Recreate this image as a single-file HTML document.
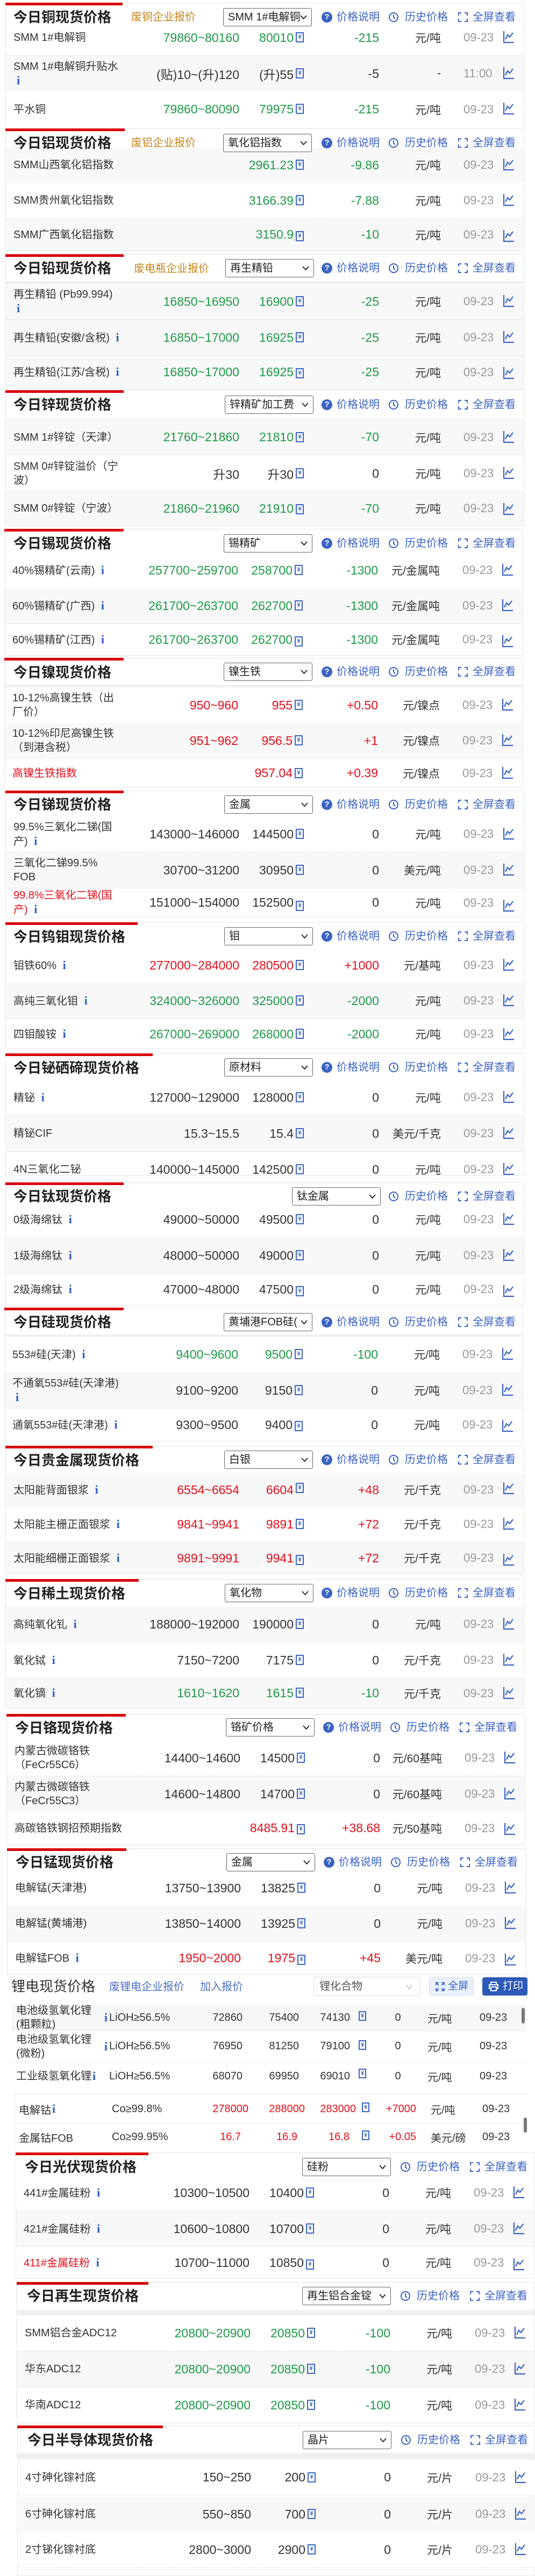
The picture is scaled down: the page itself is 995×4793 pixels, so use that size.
<!DOCTYPE html>
<html><head><meta charset="utf-8">
<style>
*{box-sizing:border-box}
body{margin:0;width:995px;height:4783px;position:relative;background:#fff;font-family:"Liberation Sans","Noto Sans CJK SC",sans-serif;color:#333;overflow:hidden}
.sec{position:absolute;border:1px solid #e6e6e6;background:#fff}
.bar{position:absolute;height:5px;background:#d9000d}
.band{position:absolute;height:6px;background:#f0f0f0}
.t{position:absolute;font-size:26px;font-weight:bold;color:#222;line-height:30px;white-space:nowrap}
.sub{position:absolute;font-size:20px;color:#c4851c;line-height:24px;white-space:nowrap}
.sel{position:absolute;width:165px;height:34px;border:1px solid #666;border-radius:3px;font-size:20px;line-height:32px;padding-left:8px;white-space:nowrap;overflow:hidden;color:#222;background:#fff;padding-right:26px}
.sel svg{position:absolute;right:8px;top:12px;width:13px;height:9px;fill:none;stroke:#222;stroke-width:1.8}
.L{position:absolute;left:0;width:995px;height:24px}
.L>*{position:absolute;top:0;font-size:20px;line-height:24px;color:#3b63c4;white-space:nowrap;font-weight:normal;font-style:normal}
.L .h1{left:598px;top:2px;width:20px;height:20px;border-radius:50%;background:#3b63c4;color:#fff;font:bold 15px/20px "Liberation Sans",sans-serif;text-align:center}
.L .a1{left:626px}.L .h2{left:722px;top:2px}.L .a2{left:753px}.L .h3{left:851px;top:2px}.L .a3{left:879px}
.L svg{width:20px;height:20px;fill:none;stroke:#3b63c4;stroke-width:2}
.r{position:absolute;height:67px;border-bottom:1px dashed #e2e2e2;font-size:23px;background:#fff}
.r.g{background:#f8f8f8}
.r>span{position:absolute;top:0;height:100%;display:flex;align-items:center;white-space:nowrap}
.r>span.n{left:14px;width:200px;white-space:normal;line-height:26px;font-size:20px;color:#333}
.rg{left:194px;width:240px;justify-content:flex-end}
.p{left:395px;width:140px;justify-content:flex-end}
.c{left:574px;width:120px;justify-content:flex-end}
.r>span.u{left:680px;width:129px;justify-content:flex-end;font-size:21px}
.r>span.d{left:851px;color:#999;font-size:22px}
.y{position:absolute;left:539px;top:23px;width:15px;height:19px;border:2px solid #3b63c4;font-style:normal;font-size:11px;line-height:15px;text-align:center;color:#3b63c4;font-weight:bold;border-radius:1px}
.k{position:absolute;left:924px;top:20px;width:22px;height:24px;fill:none;stroke:#3b63c4;stroke-width:2.2}
.G{color:#1f9a48}.R{color:#e3101c}.K{color:#333}
.i{font-family:"Liberation Serif",serif;font-weight:bold;color:#2c5bc6;font-size:22px;margin-left:6px}
.nr{color:#e3101c}
.lr{position:absolute;font-size:20px;border-bottom:1px solid #eee;background:#fff}
.lr>span{position:absolute;top:0;height:100%;display:flex;align-items:center;white-space:nowrap}
.lr>span.ln{white-space:normal;line-height:26px;width:170px}
.lr .ly{position:absolute;width:14px;height:18px;border:2px solid #3b63c4;font-style:normal;font-size:11px;line-height:14px;text-align:center;color:#3b63c4;font-weight:bold}
</style></head><body>

<!-- COPPER -->
<div class="sec" style="top:5px;left:10px;width:965px;height:231px"></div>
<div class="r" style="top:37px;left:11px;width:963px"><span class="n"><span>SMM 1#电解铜</span></span><span class="rg G">79860~80160</span><span class="p G">80010</span><i class="y">¥</i><span class="c G">-215</span><span class="u">元/吨</span><span class="d">09-23</span><svg class="k" viewBox="0 0 22 24"><path d="M2 1V22H21M5 16L9 8L13 12L19 4"/></svg></div>
<div class="r g" style="top:104px;left:11px;width:963px"><span class="n"><span>SMM 1#电解铜升贴水 <b class="i">i</b></span></span><span class="rg K">(贴)10~(升)120</span><span class="p K">(升)55</span><i class="y">¥</i><span class="c K">-5</span><span class="u">-</span><span class="d">11:00</span><svg class="k" viewBox="0 0 22 24"><path d="M2 1V22H21M5 16L9 8L13 12L19 4"/></svg></div>
<div class="r" style="top:170px;left:11px;width:963px;border-bottom:none"><span class="n"><span>平水铜</span></span><span class="rg G">79860~80090</span><span class="p G">79975</span><i class="y">¥</i><span class="c G">-215</span><span class="u">元/吨</span><span class="d">09-23</span><svg class="k" viewBox="0 0 22 24"><path d="M2 1V22H21M5 16L9 8L13 12L19 4"/></svg></div>
<div class="bar" style="top:5px;left:10px;width:218px"></div>
<div class="t" style="top:17px;left:25px;background:#fff">今日铜现货价格</div>
<div class="sub" style="top:20px;left:244px">废铜企业报价</div>
<div class="sel" style="top:15px;left:415px">SMM 1#电解铜<svg viewBox="0 0 13 9"><path d="M1 1L6.5 7L12 1"/></svg></div>
<div class="L" style="top:20px"><i class="h1">?</i><b class="a1">价格说明</b><i class="h2"><svg viewBox="0 0 20 20"><circle cx="10" cy="10" r="8"/><path d="M10 5V10L13 13"/></svg></i><b class="a2">历史价格</b><i class="h3"><svg viewBox="0 0 20 20"><path d="M2 7V2H7M13 2H18V7M18 13V18H13M7 18H2V13"/></svg></i><b class="a3">全屏查看</b></div>

<!-- ALUMINIUM -->
<div class="sec" style="top:239px;left:10px;width:965px;height:228px"></div>
<div class="r g" style="top:274px;left:11px;width:963px"><span class="n"><span>SMM山西氧化铝指数</span></span><span class="p G">2961.23</span><i class="y">¥</i><span class="c G">-9.86</span><span class="u">元/吨</span><span class="d">09-23</span><svg class="k" viewBox="0 0 22 24"><path d="M2 1V22H21M5 16L9 8L13 12L19 4"/></svg></div>
<div class="r" style="top:340px;left:11px;width:963px"><span class="n"><span>SMM贵州氧化铝指数</span></span><span class="p G">3166.39</span><i class="y">¥</i><span class="c G">-7.88</span><span class="u">元/吨</span><span class="d">09-23</span><svg class="k" viewBox="0 0 22 24"><path d="M2 1V22H21M5 16L9 8L13 12L19 4"/></svg></div>
<div class="r g" style="top:407px;left:11px;width:963px;height:59px;border-bottom:none"><span class="n"><span>SMM广西氧化铝指数</span></span><span class="p G">3150.9</span><i class="y">¥</i><span class="c G">-10</span><span class="u">元/吨</span><span class="d">09-23</span><svg class="k" viewBox="0 0 22 24"><path d="M2 1V22H21M5 16L9 8L13 12L19 4"/></svg></div>
<div class="bar" style="top:239px;left:10px;width:222px"></div>
<div class="t" style="top:251px;left:25px">今日铝现货价格</div>
<div class="sub" style="top:254px;left:244px">废铝企业报价</div>
<div class="sel" style="top:249px;left:415px">氧化铝指数<svg viewBox="0 0 13 9"><path d="M1 1L6.5 7L12 1"/></svg></div>
<div class="L" style="top:254px"><i class="h1">?</i><b class="a1">价格说明</b><i class="h2"><svg viewBox="0 0 20 20"><circle cx="10" cy="10" r="8"/><path d="M10 5V10L13 13"/></svg></i><b class="a2">历史价格</b><i class="h3"><svg viewBox="0 0 20 20"><path d="M2 7V2H7M13 2H18V7M18 13V18H13M7 18H2V13"/></svg></i><b class="a3">全屏查看</b></div>

<!-- LEAD -->
<div class="sec" style="top:473px;left:10px;width:965px;height:251px"></div>
<div class="band" style="top:523px;left:11px;width:963px"></div>
<div class="r g" style="top:528px;left:11px;width:963px"><span class="n"><span>再生精铅 (Pb99.994) <b class="i">i</b></span></span><span class="rg G">16850~16950</span><span class="p G">16900</span><i class="y">¥</i><span class="c G">-25</span><span class="u">元/吨</span><span class="d">09-23</span><svg class="k" viewBox="0 0 22 24"><path d="M2 1V22H21M5 16L9 8L13 12L19 4"/></svg></div>
<div class="r g" style="top:595px;left:11px;width:963px"><span class="n"><span>再生精铅(安徽/含税) <b class="i">i</b></span></span><span class="rg G">16850~17000</span><span class="p G">16925</span><i class="y">¥</i><span class="c G">-25</span><span class="u">元/吨</span><span class="d">09-23</span><svg class="k" viewBox="0 0 22 24"><path d="M2 1V22H21M5 16L9 8L13 12L19 4"/></svg></div>
<div class="r g" style="top:662px;left:11px;width:963px;height:61px;border-bottom:none"><span class="n"><span>再生精铅(江苏/含税) <b class="i">i</b></span></span><span class="rg G">16850~17000</span><span class="p G">16925</span><i class="y">¥</i><span class="c G">-25</span><span class="u">元/吨</span><span class="d">09-23</span><svg class="k" viewBox="0 0 22 24"><path d="M2 1V22H21M5 16L9 8L13 12L19 4"/></svg></div>
<div class="bar" style="top:473px;left:10px;width:220px"></div>
<div class="t" style="top:484px;left:25px">今日铅现货价格</div>
<div class="sub" style="top:488px;left:249px">废电瓶企业报价</div>
<div class="sel" style="top:482px;left:419px">再生精铅<svg viewBox="0 0 13 9"><path d="M1 1L6.5 7L12 1"/></svg></div>
<div class="L" style="top:487px"><i class="h1">?</i><b class="a1">价格说明</b><i class="h2"><svg viewBox="0 0 20 20"><circle cx="10" cy="10" r="8"/><path d="M10 5V10L13 13"/></svg></i><b class="a2">历史价格</b><i class="h3"><svg viewBox="0 0 20 20"><path d="M2 7V2H7M13 2H18V7M18 13V18H13M7 18H2V13"/></svg></i><b class="a3">全屏查看</b></div>

<!-- ZINC -->
<div class="sec" style="top:726px;left:10px;width:965px;height:252px"></div>
<div class="r g" style="top:780px;left:11px;width:963px;border-top:1px dashed #e2e2e2"><span class="n"><span>SMM 1#锌锭（天津）</span></span><span class="rg G">21760~21860</span><span class="p G">21810</span><i class="y">¥</i><span class="c G">-70</span><span class="u">元/吨</span><span class="d">09-23</span><svg class="k" viewBox="0 0 22 24"><path d="M2 1V22H21M5 16L9 8L13 12L19 4"/></svg></div>
<div class="r" style="top:848px;left:11px;width:963px"><span class="n"><span>SMM 0#锌锭溢价（宁波）</span></span><span class="rg K">升30</span><span class="p K">升30</span><i class="y">¥</i><span class="c K">0</span><span class="u">元/吨</span><span class="d">09-23</span><svg class="k" viewBox="0 0 22 24"><path d="M2 1V22H21M5 16L9 8L13 12L19 4"/></svg></div>
<div class="r g" style="top:915px;left:11px;width:963px;height:62px;border-bottom:none"><span class="n"><span>SMM 0#锌锭（宁波）</span></span><span class="rg G">21860~21960</span><span class="p G">21910</span><i class="y">¥</i><span class="c G">-70</span><span class="u">元/吨</span><span class="d">09-23</span><svg class="k" viewBox="0 0 22 24"><path d="M2 1V22H21M5 16L9 8L13 12L19 4"/></svg></div>
<div class="bar" style="top:726px;left:10px;width:220px"></div>
<div class="t" style="top:738px;left:25px">今日锌现货价格</div>
<div class="sel" style="top:736px;left:418px">锌精矿加工费<svg viewBox="0 0 13 9"><path d="M1 1L6.5 7L12 1"/></svg></div>
<div class="L" style="top:741px"><i class="h1">?</i><b class="a1">价格说明</b><i class="h2"><svg viewBox="0 0 20 20"><circle cx="10" cy="10" r="8"/><path d="M10 5V10L13 13"/></svg></i><b class="a2">历史价格</b><i class="h3"><svg viewBox="0 0 20 20"><path d="M2 7V2H7M13 2H18V7M18 13V18H13M7 18H2V13"/></svg></i><b class="a3">全屏查看</b></div>

<!-- TIN -->
<div class="sec" style="top:984px;left:8px;width:965px;height:236px"></div>
<div class="r" style="top:1028px;left:9px;width:963px"><span class="n"><span>40%锡精矿(云南) <b class="i">i</b></span></span><span class="rg G">257700~259700</span><span class="p G">258700</span><i class="y">¥</i><span class="c G">-1300</span><span class="u">元/金属吨</span><span class="d">09-23</span><svg class="k" viewBox="0 0 22 24"><path d="M2 1V22H21M5 16L9 8L13 12L19 4"/></svg></div>
<div class="r g" style="top:1094px;left:9px;width:963px"><span class="n"><span>60%锡精矿(广西) <b class="i">i</b></span></span><span class="rg G">261700~263700</span><span class="p G">262700</span><i class="y">¥</i><span class="c G">-1300</span><span class="u">元/金属吨</span><span class="d">09-23</span><svg class="k" viewBox="0 0 22 24"><path d="M2 1V22H21M5 16L9 8L13 12L19 4"/></svg></div>
<div class="r" style="top:1161px;left:9px;width:963px;height:58px;border-bottom:none"><span class="n"><span>60%锡精矿(江西) <b class="i">i</b></span></span><span class="rg G">261700~263700</span><span class="p G">262700</span><i class="y">¥</i><span class="c G">-1300</span><span class="u">元/金属吨</span><span class="d">09-23</span><svg class="k" viewBox="0 0 22 24"><path d="M2 1V22H21M5 16L9 8L13 12L19 4"/></svg></div>
<div class="bar" style="top:984px;left:8px;width:222px"></div>
<div class="t" style="top:996px;left:25px">今日锡现货价格</div>
<div class="sel" style="top:994px;left:416px">锡精矿<svg viewBox="0 0 13 9"><path d="M1 1L6.5 7L12 1"/></svg></div>
<div class="L" style="top:999px"><i class="h1">?</i><b class="a1">价格说明</b><i class="h2"><svg viewBox="0 0 20 20"><circle cx="10" cy="10" r="8"/><path d="M10 5V10L13 13"/></svg></i><b class="a2">历史价格</b><i class="h3"><svg viewBox="0 0 20 20"><path d="M2 7V2H7M13 2H18V7M18 13V18H13M7 18H2V13"/></svg></i><b class="a3">全屏查看</b></div>

<!-- NICKEL -->
<div class="sec" style="top:1224px;left:8px;width:965px;height:242px"></div>
<div class="band" style="top:1274px;left:9px;width:963px"></div>
<div class="r" style="top:1279px;left:9px;width:963px"><span class="n"><span>10-12%高镍生铁（出厂价）</span></span><span class="rg R">950~960</span><span class="p R">955</span><i class="y">¥</i><span class="c R">+0.50</span><span class="u">元/镍点</span><span class="d">09-23</span><svg class="k" viewBox="0 0 22 24"><path d="M2 1V22H21M5 16L9 8L13 12L19 4"/></svg></div>
<div class="r g" style="top:1345px;left:9px;width:963px"><span class="n"><span>10-12%印尼高镍生铁（到港含税）</span></span><span class="rg R">951~962</span><span class="p R">956.5</span><i class="y">¥</i><span class="c R">+1</span><span class="u">元/镍点</span><span class="d">09-23</span><svg class="k" viewBox="0 0 22 24"><path d="M2 1V22H21M5 16L9 8L13 12L19 4"/></svg></div>
<div class="r" style="top:1412px;left:9px;width:963px;height:53px;border-bottom:none"><span class="n"><span class="nr">高镍生铁指数</span></span><span class="p R">957.04</span><i class="y" style="top:17px">¥</i><span class="c R">+0.39</span><span class="u">元/镍点</span><span class="d">09-23</span><svg class="k" viewBox="0 0 22 24" style="top:14px"><path d="M2 1V22H21M5 16L9 8L13 12L19 4"/></svg></div>
<div class="bar" style="top:1224px;left:8px;width:222px"></div>
<div class="t" style="top:1236px;left:25px">今日镍现货价格</div>
<div class="sel" style="top:1233px;left:416px">镍生铁<svg viewBox="0 0 13 9"><path d="M1 1L6.5 7L12 1"/></svg></div>
<div class="L" style="top:1238px"><i class="h1">?</i><b class="a1">价格说明</b><i class="h2"><svg viewBox="0 0 20 20"><circle cx="10" cy="10" r="8"/><path d="M10 5V10L13 13"/></svg></i><b class="a2">历史价格</b><i class="h3"><svg viewBox="0 0 20 20"><path d="M2 7V2H7M13 2H18V7M18 13V18H13M7 18H2V13"/></svg></i><b class="a3">全屏查看</b></div>

<!-- ANTIMONY -->
<div class="sec" style="top:1471px;left:10px;width:965px;height:236px"></div>
<div class="r" style="top:1519px;left:11px;width:963px"><span class="n"><span>99.5%三氧化二锑(国产) <b class="i">i</b></span></span><span class="rg K">143000~146000</span><span class="p K">144500</span><i class="y">¥</i><span class="c K">0</span><span class="u">元/吨</span><span class="d">09-23</span><svg class="k" viewBox="0 0 22 24"><path d="M2 1V22H21M5 16L9 8L13 12L19 4"/></svg></div>
<div class="r g" style="top:1586px;left:11px;width:963px"><span class="n"><span>三氧化二锑99.5% FOB</span></span><span class="rg K">30700~31200</span><span class="p K">30950</span><i class="y">¥</i><span class="c K">0</span><span class="u">美元/吨</span><span class="d">09-23</span><svg class="k" viewBox="0 0 22 24"><path d="M2 1V22H21M5 16L9 8L13 12L19 4"/></svg></div>
<div class="r" style="top:1653px;left:11px;width:963px;height:53px;border-bottom:none"><span class="n"><span><span class="nr">99.8%三氧化二锑(国产)</span> <b class="i">i</b></span></span><span class="rg K">151000~154000</span><span class="p K">152500</span><i class="y">¥</i><span class="c K">0</span><span class="u">元/吨</span><span class="d">09-23</span><svg class="k" viewBox="0 0 22 24"><path d="M2 1V22H21M5 16L9 8L13 12L19 4"/></svg></div>
<div class="bar" style="top:1471px;left:10px;width:220px"></div>
<div class="t" style="top:1482px;left:25px">今日锑现货价格</div>
<div class="sel" style="top:1480px;left:417px">金属<svg viewBox="0 0 13 9"><path d="M1 1L6.5 7L12 1"/></svg></div>
<div class="L" style="top:1485px"><i class="h1">?</i><b class="a1">价格说明</b><i class="h2"><svg viewBox="0 0 20 20"><circle cx="10" cy="10" r="8"/><path d="M10 5V10L13 13"/></svg></i><b class="a2">历史价格</b><i class="h3"><svg viewBox="0 0 20 20"><path d="M2 7V2H7M13 2H18V7M18 13V18H13M7 18H2V13"/></svg></i><b class="a3">全屏查看</b></div>

<!-- W MO -->
<div class="sec" style="top:1716px;left:10px;width:965px;height:236px"></div>
<div class="r" style="top:1763px;left:11px;width:963px"><span class="n"><span>钼铁60% <b class="i">i</b></span></span><span class="rg R">277000~284000</span><span class="p R">280500</span><i class="y">¥</i><span class="c R">+1000</span><span class="u">元/基吨</span><span class="d">09-23</span><svg class="k" viewBox="0 0 22 24"><path d="M2 1V22H21M5 16L9 8L13 12L19 4"/></svg></div>
<div class="r g" style="top:1829px;left:11px;width:963px"><span class="n"><span>高纯三氧化钼 <b class="i">i</b></span></span><span class="rg G">324000~326000</span><span class="p G">325000</span><i class="y">¥</i><span class="c G">-2000</span><span class="u">元/吨</span><span class="d">09-23</span><svg class="k" viewBox="0 0 22 24"><path d="M2 1V22H21M5 16L9 8L13 12L19 4"/></svg></div>
<div class="r" style="top:1897px;left:11px;width:963px;height:54px;border-bottom:none"><span class="n"><span>四钼酸铵 <b class="i">i</b></span></span><span class="rg G">267000~269000</span><span class="p G">268000</span><i class="y" style="top:17px">¥</i><span class="c G">-2000</span><span class="u">元/吨</span><span class="d">09-23</span><svg class="k" viewBox="0 0 22 24" style="top:15px"><path d="M2 1V22H21M5 16L9 8L13 12L19 4"/></svg></div>
<div class="bar" style="top:1716px;left:10px;width:246px"></div>
<div class="t" style="top:1728px;left:25px">今日钨钼现货价格</div>
<div class="sel" style="top:1725px;left:417px">钼<svg viewBox="0 0 13 9"><path d="M1 1L6.5 7L12 1"/></svg></div>
<div class="L" style="top:1730px"><i class="h1">?</i><b class="a1">价格说明</b><i class="h2"><svg viewBox="0 0 20 20"><circle cx="10" cy="10" r="8"/><path d="M10 5V10L13 13"/></svg></i><b class="a2">历史价格</b><i class="h3"><svg viewBox="0 0 20 20"><path d="M2 7V2H7M13 2H18V7M18 13V18H13M7 18H2V13"/></svg></i><b class="a3">全屏查看</b></div>

<!-- BI SE TE -->
<div class="sec" style="top:1960px;left:10px;width:965px;height:228px"></div>
<div class="r" style="top:2009px;left:11px;width:963px"><span class="n"><span>精铋 <b class="i">i</b></span></span><span class="rg K">127000~129000</span><span class="p K">128000</span><i class="y">¥</i><span class="c K">0</span><span class="u">元/吨</span><span class="d">09-23</span><svg class="k" viewBox="0 0 22 24"><path d="M2 1V22H21M5 16L9 8L13 12L19 4"/></svg></div>
<div class="r g" style="top:2076px;left:11px;width:963px"><span class="n"><span>精铋CIF</span></span><span class="rg K">15.3~15.5</span><span class="p K">15.4</span><i class="y">¥</i><span class="c K">0</span><span class="u">美元/千克</span><span class="d">09-23</span><svg class="k" viewBox="0 0 22 24"><path d="M2 1V22H21M5 16L9 8L13 12L19 4"/></svg></div>
<div class="r" style="top:2143px;left:11px;width:963px;height:44px;border-bottom:none"><span class="n" style="height:66px"><span>4N三氧化二铋</span></span><span class="rg K" style="height:66px">140000~145000</span><span class="p K" style="height:66px">142500</span><i class="y">¥</i><span class="c K" style="height:66px">0</span><span class="u" style="height:66px">元/吨</span><span class="d" style="height:66px">09-23</span><svg class="k" viewBox="0 0 22 24"><path d="M2 1V22H21M5 16L9 8L13 12L19 4"/></svg></div>
<div class="bar" style="top:1960px;left:10px;width:274px"></div>
<div class="t" style="top:1972px;left:25px">今日铋硒碲现货价格</div>
<div class="sel" style="top:1969px;left:417px">原材料<svg viewBox="0 0 13 9"><path d="M1 1L6.5 7L12 1"/></svg></div>
<div class="L" style="top:1974px"><i class="h1">?</i><b class="a1">价格说明</b><i class="h2"><svg viewBox="0 0 20 20"><circle cx="10" cy="10" r="8"/><path d="M10 5V10L13 13"/></svg></i><b class="a2">历史价格</b><i class="h3"><svg viewBox="0 0 20 20"><path d="M2 7V2H7M13 2H18V7M18 13V18H13M7 18H2V13"/></svg></i><b class="a3">全屏查看</b></div>

<!-- TITANIUM -->
<div class="sec" style="top:2200px;left:10px;width:965px;height:229px"></div>
<div class="r" style="top:2236px;left:11px;width:963px"><span class="n"><span>0级海绵钛 <b class="i">i</b></span></span><span class="rg K">49000~50000</span><span class="p K">49500</span><i class="y">¥</i><span class="c K">0</span><span class="u">元/吨</span><span class="d">09-23</span><svg class="k" viewBox="0 0 22 24"><path d="M2 1V22H21M5 16L9 8L13 12L19 4"/></svg></div>
<div class="r g" style="top:2303px;left:11px;width:963px"><span class="n"><span>1级海绵钛 <b class="i">i</b></span></span><span class="rg K">48000~50000</span><span class="p K">49000</span><i class="y">¥</i><span class="c K">0</span><span class="u">元/吨</span><span class="d">09-23</span><svg class="k" viewBox="0 0 22 24"><path d="M2 1V22H21M5 16L9 8L13 12L19 4"/></svg></div>
<div class="r" style="top:2370px;left:11px;width:963px;height:58px;border-bottom:none"><span class="n"><span>2级海绵钛 <b class="i">i</b></span></span><span class="rg K">47000~48000</span><span class="p K">47500</span><i class="y">¥</i><span class="c K">0</span><span class="u">元/吨</span><span class="d">09-23</span><svg class="k" viewBox="0 0 22 24"><path d="M2 1V22H21M5 16L9 8L13 12L19 4"/></svg></div>
<div class="bar" style="top:2200px;left:10px;width:220px"></div>
<div class="t" style="top:2211px;left:25px">今日钛现货价格</div>
<div class="sel" style="top:2209px;left:543px">钛金属<svg viewBox="0 0 13 9"><path d="M1 1L6.5 7L12 1"/></svg></div>
<div class="L" style="top:2214px"><i class="h2"><svg viewBox="0 0 20 20"><circle cx="10" cy="10" r="8"/><path d="M10 5V10L13 13"/></svg></i><b class="a2">历史价格</b><i class="h3"><svg viewBox="0 0 20 20"><path d="M2 7V2H7M13 2H18V7M18 13V18H13M7 18H2V13"/></svg></i><b class="a3">全屏查看</b></div>

<!-- SILICON -->
<div class="sec" style="top:2433px;left:8px;width:965px;height:249px"></div>
<div class="band" style="top:2483px;left:9px;width:963px"></div>
<div class="r" style="top:2487px;left:9px;width:963px"><span class="n"><span>553#硅(天津) <b class="i">i</b></span></span><span class="rg G">9400~9600</span><span class="p G">9500</span><i class="y">¥</i><span class="c G">-100</span><span class="u">元/吨</span><span class="d">09-23</span><svg class="k" viewBox="0 0 22 24"><path d="M2 1V22H21M5 16L9 8L13 12L19 4"/></svg></div>
<div class="r g" style="top:2554px;left:9px;width:963px"><span class="n"><span>不通氧553#硅(天津港) <b class="i">i</b></span></span><span class="rg K">9100~9200</span><span class="p K">9150</span><i class="y">¥</i><span class="c K">0</span><span class="u">元/吨</span><span class="d">09-23</span><svg class="k" viewBox="0 0 22 24"><path d="M2 1V22H21M5 16L9 8L13 12L19 4"/></svg></div>
<div class="r" style="top:2621px;left:9px;width:963px;height:60px;border-bottom:none"><span class="n"><span>通氧553#硅(天津港) <b class="i">i</b></span></span><span class="rg K">9300~9500</span><span class="p K">9400</span><i class="y">¥</i><span class="c K">0</span><span class="u">元/吨</span><span class="d">09-23</span><svg class="k" viewBox="0 0 22 24"><path d="M2 1V22H21M5 16L9 8L13 12L19 4"/></svg></div>
<div class="bar" style="top:2433px;left:8px;width:222px"></div>
<div class="t" style="top:2445px;left:25px">今日硅现货价格</div>
<div class="sel" style="top:2443px;left:416px">黄埔港FOB硅(<svg viewBox="0 0 13 9"><path d="M1 1L6.5 7L12 1"/></svg></div>
<div class="L" style="top:2448px"><i class="h1">?</i><b class="a1">价格说明</b><i class="h2"><svg viewBox="0 0 20 20"><circle cx="10" cy="10" r="8"/><path d="M10 5V10L13 13"/></svg></i><b class="a2">历史价格</b><i class="h3"><svg viewBox="0 0 20 20"><path d="M2 7V2H7M13 2H18V7M18 13V18H13M7 18H2V13"/></svg></i><b class="a3">全屏查看</b></div>

<!-- PRECIOUS -->
<div class="sec" style="top:2690px;left:10px;width:965px;height:239px"></div>
<div class="r g" style="top:2742px;left:11px;width:963px;height:61px"><span class="n"><span>太阳能背面银浆 <b class="i">i</b></span></span><span class="rg R">6554~6654</span><span class="p R">6604</span><i class="y" style="top:17px">¥</i><span class="c R">+48</span><span class="u">元/千克</span><span class="d">09-23</span><svg class="k" viewBox="0 0 22 24" style="top:15px"><path d="M2 1V22H21M5 16L9 8L13 12L19 4"/></svg></div>
<div class="r" style="top:2803px;left:11px;width:963px"><span class="n"><span>太阳能主栅正面银浆 <b class="i">i</b></span></span><span class="rg R">9841~9941</span><span class="p R">9891</span><i class="y">¥</i><span class="c R">+72</span><span class="u">元/千克</span><span class="d">09-23</span><svg class="k" viewBox="0 0 22 24"><path d="M2 1V22H21M5 16L9 8L13 12L19 4"/></svg></div>
<div class="r g" style="top:2870px;left:11px;width:963px;height:58px;border-bottom:none"><span class="n"><span>太阳能细栅正面银浆 <b class="i">i</b></span></span><span class="rg R">9891~9991</span><span class="p R">9941</span><i class="y">¥</i><span class="c R">+72</span><span class="u">元/千克</span><span class="d">09-23</span><svg class="k" viewBox="0 0 22 24"><path d="M2 1V22H21M5 16L9 8L13 12L19 4"/></svg></div>
<div class="bar" style="top:2690px;left:10px;width:274px"></div>
<div class="t" style="top:2702px;left:25px">今日贵金属现货价格</div>
<div class="sel" style="top:2699px;left:417px">白银<svg viewBox="0 0 13 9"><path d="M1 1L6.5 7L12 1"/></svg></div>
<div class="L" style="top:2704px"><i class="h1">?</i><b class="a1">价格说明</b><i class="h2"><svg viewBox="0 0 20 20"><circle cx="10" cy="10" r="8"/><path d="M10 5V10L13 13"/></svg></i><b class="a2">历史价格</b><i class="h3"><svg viewBox="0 0 20 20"><path d="M2 7V2H7M13 2H18V7M18 13V18H13M7 18H2V13"/></svg></i><b class="a3">全屏查看</b></div>

<!-- RARE EARTH -->
<div class="sec" style="top:2938px;left:10px;width:965px;height:241px"></div>
<div class="r g" style="top:2989px;left:11px;width:963px"><span class="n"><span>高纯氧化钆 <b class="i">i</b></span></span><span class="rg K">188000~192000</span><span class="p K">190000</span><i class="y">¥</i><span class="c K">0</span><span class="u">元/吨</span><span class="d">09-23</span><svg class="k" viewBox="0 0 22 24"><path d="M2 1V22H21M5 16L9 8L13 12L19 4"/></svg></div>
<div class="r" style="top:3056px;left:11px;width:963px"><span class="n"><span>氧化铽 <b class="i">i</b></span></span><span class="rg K">7150~7200</span><span class="p K">7175</span><i class="y">¥</i><span class="c K">0</span><span class="u">元/千克</span><span class="d">09-23</span><svg class="k" viewBox="0 0 22 24"><path d="M2 1V22H21M5 16L9 8L13 12L19 4"/></svg></div>
<div class="r g" style="top:3123px;left:11px;width:963px;height:55px;border-bottom:none"><span class="n"><span>氧化镝 <b class="i">i</b></span></span><span class="rg G">1610~1620</span><span class="p G">1615</span><i class="y" style="top:17px">¥</i><span class="c G">-10</span><span class="u">元/千克</span><span class="d">09-23</span><svg class="k" viewBox="0 0 22 24" style="top:15px"><path d="M2 1V22H21M5 16L9 8L13 12L19 4"/></svg></div>
<div class="bar" style="top:2938px;left:10px;width:248px"></div>
<div class="t" style="top:2950px;left:25px">今日稀土现货价格</div>
<div class="sel" style="top:2947px;left:418px">氧化物<svg viewBox="0 0 13 9"><path d="M1 1L6.5 7L12 1"/></svg></div>
<div class="L" style="top:2952px"><i class="h1">?</i><b class="a1">价格说明</b><i class="h2"><svg viewBox="0 0 20 20"><circle cx="10" cy="10" r="8"/><path d="M10 5V10L13 13"/></svg></i><b class="a2">历史价格</b><i class="h3"><svg viewBox="0 0 20 20"><path d="M2 7V2H7M13 2H18V7M18 13V18H13M7 18H2V13"/></svg></i><b class="a3">全屏查看</b></div>

<!-- CHROMIUM -->
<div class="sec" style="top:3189px;left:12px;width:965px;height:244px"></div>
<div class="r" style="top:3238px;left:13px;width:963px"><span class="n"><span>内蒙古微碳铬铁（FeCr55C6）</span></span><span class="rg K">14400~14600</span><span class="p K">14500</span><i class="y">¥</i><span class="c K">0</span><span class="u">元/60基吨</span><span class="d">09-23</span><svg class="k" viewBox="0 0 22 24"><path d="M2 1V22H21M5 16L9 8L13 12L19 4"/></svg></div>
<div class="r g" style="top:3305px;left:13px;width:963px"><span class="n"><span>内蒙古微碳铬铁（FeCr55C3）</span></span><span class="rg K">14600~14800</span><span class="p K">14700</span><i class="y">¥</i><span class="c K">0</span><span class="u">元/60基吨</span><span class="d">09-23</span><svg class="k" viewBox="0 0 22 24"><path d="M2 1V22H21M5 16L9 8L13 12L19 4"/></svg></div>
<div class="r" style="top:3371px;left:13px;width:963px;height:61px;border-bottom:none"><span class="n"><span>高碳铬铁钢招预期指数</span></span><span class="p R">8485.91</span><i class="y">¥</i><span class="c R">+38.68</span><span class="u">元/50基吨</span><span class="d">09-23</span><svg class="k" viewBox="0 0 22 24"><path d="M2 1V22H21M5 16L9 8L13 12L19 4"/></svg></div>
<div class="bar" style="top:3189px;left:12px;width:222px"></div>
<div class="t" style="top:3200px;left:28px">今日铬现货价格</div>
<div class="sel" style="top:3197px;left:420px">铬矿价格<svg viewBox="0 0 13 9"><path d="M1 1L6.5 7L12 1"/></svg></div>
<div class="L" style="top:3202px;left:3px"><i class="h1">?</i><b class="a1">价格说明</b><i class="h2"><svg viewBox="0 0 20 20"><circle cx="10" cy="10" r="8"/><path d="M10 5V10L13 13"/></svg></i><b class="a2">历史价格</b><i class="h3"><svg viewBox="0 0 20 20"><path d="M2 7V2H7M13 2H18V7M18 13V18H13M7 18H2V13"/></svg></i><b class="a3">全屏查看</b></div>

<!-- MANGANESE -->
<div class="sec" style="top:3439px;left:13px;width:966px;height:235px"></div>
<div class="r" style="top:3480px;left:14px;width:964px"><span class="n"><span>电解锰(天津港)</span></span><span class="rg K">13750~13900</span><span class="p K">13825</span><i class="y">¥</i><span class="c K">0</span><span class="u">元/吨</span><span class="d">09-23</span><svg class="k" viewBox="0 0 22 24"><path d="M2 1V22H21M5 16L9 8L13 12L19 4"/></svg></div>
<div class="r g" style="top:3546px;left:14px;width:964px"><span class="n"><span>电解锰(黄埔港)</span></span><span class="rg K">13850~14000</span><span class="p K">13925</span><i class="y">¥</i><span class="c K">0</span><span class="u">元/吨</span><span class="d">09-23</span><svg class="k" viewBox="0 0 22 24"><path d="M2 1V22H21M5 16L9 8L13 12L19 4"/></svg></div>
<div class="r" style="top:3614px;left:14px;width:964px;height:59px;border-bottom:none"><span class="n"><span>电解锰FOB <b class="i">i</b></span></span><span class="rg R">1950~2000</span><span class="p R">1975</span><i class="y">¥</i><span class="c R">+45</span><span class="u">美元/吨</span><span class="d">09-23</span><svg class="k" viewBox="0 0 22 24"><path d="M2 1V22H21M5 16L9 8L13 12L19 4"/></svg></div>
<div class="bar" style="top:3439px;left:13px;width:222px"></div>
<div class="t" style="top:3450px;left:29px">今日锰现货价格</div>
<div class="sel" style="top:3448px;left:421px">金属<svg viewBox="0 0 13 9"><path d="M1 1L6.5 7L12 1"/></svg></div>
<div class="L" style="top:3453px;left:4px"><i class="h1">?</i><b class="a1">价格说明</b><i class="h2"><svg viewBox="0 0 20 20"><circle cx="10" cy="10" r="8"/><path d="M10 5V10L13 13"/></svg></i><b class="a2">历史价格</b><i class="h3"><svg viewBox="0 0 20 20"><path d="M2 7V2H7M13 2H18V7M18 13V18H13M7 18H2V13"/></svg></i><b class="a3">全屏查看</b></div>

<!-- LITHIUM -->
<div style="position:absolute;top:3680px;left:21px;font-size:26px;line-height:32px;color:#333">锂电现货价格</div>
<div style="position:absolute;top:3685px;left:203px;font-size:20px;line-height:24px;color:#4a6fc6">废锂电企业报价</div>
<div style="position:absolute;top:3685px;left:372px;font-size:20px;line-height:24px;color:#4a6fc6">加入报价</div>
<div style="position:absolute;top:3678px;left:583px;width:199px;height:36px;border:1px solid #dcdcdc;border-radius:4px;font-size:20px;line-height:34px;padding-left:10px;color:#555">锂化合物<svg style="position:absolute;right:14px;top:12px;width:12px;height:12px;fill:none;stroke:#bbb;stroke-width:1.4" viewBox="0 0 12 12"><path d="M1 2L6 10L11 2"/></svg></div>
<div style="position:absolute;top:3679px;left:798px;width:83px;height:34px;background:#eaf1fd;border:1px solid #cfdcf5;border-radius:4px;font-size:19px;line-height:32px;color:#3b63c4;padding-left:34px"><svg style="position:absolute;left:11px;top:8px;width:17px;height:17px;fill:none;stroke:#3b63c4;stroke-width:1.8" viewBox="0 0 17 17"><path d="M1 6V1H6M11 1H16V6M16 11V16H11M6 16H1V11M1 1L6 6M16 1L11 6M16 16L11 11M1 16L6 11"/></svg>全屏</div>
<div style="position:absolute;top:3679px;left:897px;width:84px;height:34px;background:#2d5ab8;border-radius:4px;font-size:19px;line-height:34px;color:#fff;padding-left:38px"><svg style="position:absolute;left:12px;top:8px;width:18px;height:18px;fill:none;stroke:#fff;stroke-width:2" viewBox="0 0 18 18"><path d="M4 6V1H14V6M3 13H1V6H17V13H15M4 10H14V17H4Z"/></svg>打印</div>

<div class="lr" style="top:3730px;left:21px;width:959px;height:49px;background:#f7f7f7"><span class="ln" style="left:9px">电池级氢氧化锂(粗颗粒) <b class="i">i</b></span><span style="left:182px">LiOH≥56.5%</span><span style="left:330px;width:100px;justify-content:flex-end">72860</span><span style="left:435px;width:100px;justify-content:flex-end">75400</span><span style="left:530px;width:100px;justify-content:flex-end">74130</span><i class="ly" style="left:646px;top:12px">¥</i><span style="left:694px;width:50px;justify-content:center">0</span><span style="left:774px">元/吨</span><span style="left:871px">09-23</span></div>
<div class="lr" style="top:3779px;left:21px;width:959px;height:58px"><span class="ln" style="left:9px">电池级氢氧化锂(微粉) <b class="i">i</b></span><span style="left:182px">LiOH≥56.5%</span><span style="left:330px;width:100px;justify-content:flex-end">76950</span><span style="left:435px;width:100px;justify-content:flex-end">81250</span><span style="left:530px;width:100px;justify-content:flex-end">79100</span><i class="ly" style="left:646px;top:17px">¥</i><span style="left:694px;width:50px;justify-content:center">0</span><span style="left:774px">元/吨</span><span style="left:871px">09-23</span></div>
<div class="lr" style="top:3837px;left:21px;width:959px;height:52px;border-bottom:none"><span class="ln" style="left:9px;width:180px">工业级氢氧化锂<b class="i" style="margin-left:2px">i</b></span><span style="left:182px">LiOH≥56.5%</span><span style="left:330px;width:100px;justify-content:flex-end">68070</span><span style="left:435px;width:100px;justify-content:flex-end">69950</span><span style="left:530px;width:100px;justify-content:flex-end">69010</span><i class="ly" style="left:646px;top:12px">¥</i><span style="left:694px;width:50px;justify-content:center">0</span><span style="left:774px">元/吨</span><span style="left:871px">09-23</span></div>
<div style="position:absolute;top:3736px;left:970px;width:6px;height:29px;border-radius:3px;background:#777"></div>

<div style="position:absolute;top:3896px;left:27px;width:958px;height:104px;border-top:1px solid #eee;border-left:1px solid #eee"></div>
<div class="lr" style="top:3897px;left:28px;width:957px;height:55px"><span style="left:7px">电解钴<b class="i" style="margin-left:2px">i</b></span><span style="left:180px">Co≥99.8%</span><span class="R" style="left:334px;width:100px;justify-content:flex-end">278000</span><span class="R" style="left:439px;width:100px;justify-content:flex-end">288000</span><span class="R" style="left:534px;width:100px;justify-content:flex-end">283000</span><i class="ly" style="left:645px;top:15px">¥</i><span class="R" style="left:646px;width:100px;justify-content:flex-end">+7000</span><span style="left:773px">元/吨</span><span style="left:869px">09-23</span></div>
<div class="lr" style="top:3952px;left:28px;width:957px;height:48px;border-bottom:none"><span style="left:7px">金属钴FOB</span><span style="left:180px">Co≥99.95%</span><span class="R" style="left:334px;width:100px;justify-content:flex-end;padding-right:14px">16.7</span><span class="R" style="left:439px;width:100px;justify-content:flex-end;padding-right:14px">16.9</span><span class="R" style="left:534px;width:100px;justify-content:flex-end;padding-right:12px">16.8</span><i class="ly" style="left:645px;top:12px">¥</i><span class="R" style="left:646px;width:100px;justify-content:flex-end">+0.05</span><span style="left:773px">美元/磅</span><span style="left:869px">09-23</span></div>
<div style="position:absolute;top:3940px;left:974px;width:6px;height:28px;border-radius:3px;background:#777"></div>

<!-- PV -->
<div class="sec" style="top:4005px;left:29px;width:966px;height:235px"></div>
<div class="r" style="top:4047px;left:30px;width:964px"><span class="n"><span>441#金属硅粉 <b class="i">i</b></span></span><span class="rg K">10300~10500</span><span class="p K">10400</span><i class="y">¥</i><span class="c K">0</span><span class="u">元/吨</span><span class="d">09-23</span><svg class="k" viewBox="0 0 22 24"><path d="M2 1V22H21M5 16L9 8L13 12L19 4"/></svg></div>
<div class="r g" style="top:4114px;left:30px;width:964px"><span class="n"><span>421#金属硅粉 <b class="i">i</b></span></span><span class="rg K">10600~10800</span><span class="p K">10700</span><i class="y">¥</i><span class="c K">0</span><span class="u">元/吨</span><span class="d">09-23</span><svg class="k" viewBox="0 0 22 24"><path d="M2 1V22H21M5 16L9 8L13 12L19 4"/></svg></div>
<div class="r" style="top:4181px;left:30px;width:964px;height:58px;border-bottom:none"><span class="n"><span><span class="nr">411#金属硅粉</span> <b class="i">i</b></span></span><span class="rg K">10700~11000</span><span class="p K">10850</span><i class="y">¥</i><span class="c K">0</span><span class="u">元/吨</span><span class="d">09-23</span><svg class="k" viewBox="0 0 22 24"><path d="M2 1V22H21M5 16L9 8L13 12L19 4"/></svg></div>
<div class="bar" style="top:4005px;left:29px;width:247px"></div>
<div class="t" style="top:4017px;left:46px">今日光伏现货价格</div>
<div class="sel" style="top:4015px;left:562px">硅粉<svg viewBox="0 0 13 9"><path d="M1 1L6.5 7L12 1"/></svg></div>
<div class="L" style="top:4020px;left:22px"><i class="h2"><svg viewBox="0 0 20 20"><circle cx="10" cy="10" r="8"/><path d="M10 5V10L13 13"/></svg></i><b class="a2">历史价格</b><i class="h3"><svg viewBox="0 0 20 20"><path d="M2 7V2H7M13 2H18V7M18 13V18H13M7 18H2V13"/></svg></i><b class="a3">全屏查看</b></div>

<!-- RECYCLED -->
<div class="sec" style="top:4246px;left:31px;width:964px;height:263px"></div>
<div class="band" style="top:4298px;left:32px;width:962px;height:10px"></div>
<div class="r" style="top:4308px;left:32px;width:962px"><span class="n"><span>SMM铝合金ADC12</span></span><span class="rg G">20800~20900</span><span class="p G">20850</span><i class="y">¥</i><span class="c G">-100</span><span class="u">元/吨</span><span class="d">09-23</span><svg class="k" viewBox="0 0 22 24"><path d="M2 1V22H21M5 16L9 8L13 12L19 4"/></svg></div>
<div class="r g" style="top:4375px;left:32px;width:962px"><span class="n"><span>华东ADC12</span></span><span class="rg G">20800~20900</span><span class="p G">20850</span><i class="y">¥</i><span class="c G">-100</span><span class="u">元/吨</span><span class="d">09-23</span><svg class="k" viewBox="0 0 22 24"><path d="M2 1V22H21M5 16L9 8L13 12L19 4"/></svg></div>
<div class="r" style="top:4442px;left:32px;width:962px;height:66px;border-bottom:none"><span class="n"><span>华南ADC12</span></span><span class="rg G">20800~20900</span><span class="p G">20850</span><i class="y">¥</i><span class="c G">-100</span><span class="u">元/吨</span><span class="d">09-23</span><svg class="k" viewBox="0 0 22 24"><path d="M2 1V22H21M5 16L9 8L13 12L19 4"/></svg></div>
<div class="bar" style="top:4246px;left:31px;width:245px"></div>
<div class="t" style="top:4257px;left:50px">今日再生现货价格</div>
<div class="sel" style="top:4255px;left:562px">再生铝合金锭<svg viewBox="0 0 13 9"><path d="M1 1L6.5 7L12 1"/></svg></div>
<div class="L" style="top:4260px;left:22px"><i class="h2"><svg viewBox="0 0 20 20"><circle cx="10" cy="10" r="8"/><path d="M10 5V10L13 13"/></svg></i><b class="a2">历史价格</b><i class="h3"><svg viewBox="0 0 20 20"><path d="M2 7V2H7M13 2H18V7M18 13V18H13M7 18H2V13"/></svg></i><b class="a3">全屏查看</b></div>

<!-- SEMICONDUCTOR -->
<div class="sec" style="top:4513px;left:32px;width:963px;height:280px"></div>
<div class="band" style="top:4564px;left:33px;width:962px;height:11px"></div>
<div class="r" style="top:4576px;left:33px;width:962px;border-top:1px dashed #e2e2e2"><span class="n"><span>4寸砷化镓衬底</span></span><span class="rg K">150~250</span><span class="p K">200</span><i class="y">¥</i><span class="c K">0</span><span class="u">元/片</span><span class="d">09-23</span><svg class="k" viewBox="0 0 22 24"><path d="M2 1V22H21M5 16L9 8L13 12L19 4"/></svg></div>
<div class="r g" style="top:4645px;left:33px;width:962px"><span class="n"><span>6寸砷化镓衬底</span></span><span class="rg K">550~850</span><span class="p K">700</span><i class="y">¥</i><span class="c K">0</span><span class="u">元/片</span><span class="d">09-23</span><svg class="k" viewBox="0 0 22 24"><path d="M2 1V22H21M5 16L9 8L13 12L19 4"/></svg></div>
<div class="r" style="top:4711px;left:33px;width:962px"><span class="n"><span>2寸锑化镓衬底</span></span><span class="rg K">2800~3000</span><span class="p K">2900</span><i class="y">¥</i><span class="c K">0</span><span class="u">元/片</span><span class="d">09-23</span><svg class="k" viewBox="0 0 22 24"><path d="M2 1V22H21M5 16L9 8L13 12L19 4"/></svg></div>
<div class="bar" style="top:4513px;left:32px;width:271px"></div>
<div class="t" style="top:4525px;left:51px">今日半导体现货价格</div>
<div class="sel" style="top:4523px;left:563px">晶片<svg viewBox="0 0 13 9"><path d="M1 1L6.5 7L12 1"/></svg></div>
<div class="L" style="top:4528px;left:23px"><i class="h2"><svg viewBox="0 0 20 20"><circle cx="10" cy="10" r="8"/><path d="M10 5V10L13 13"/></svg></i><b class="a2">历史价格</b><i class="h3"><svg viewBox="0 0 20 20"><path d="M2 7V2H7M13 2H18V7M18 13V18H13M7 18H2V13"/></svg></i><b class="a3">全屏查看</b></div>

</body></html>
